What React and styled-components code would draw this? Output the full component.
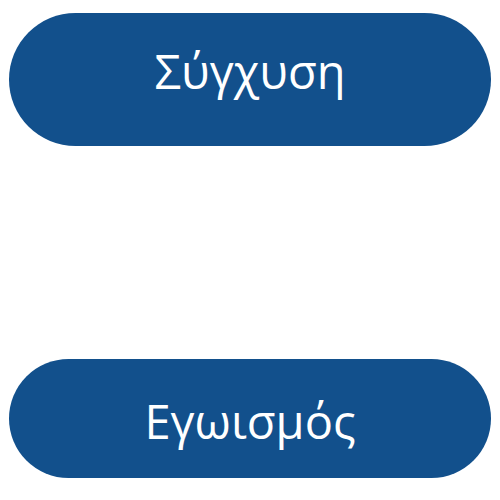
import React from "react";
import styled, { createGlobalStyle } from "styled-components";

const Global = createGlobalStyle`
  html, body { margin: 0; padding: 0; background: #ffffff; }
  body { font-family: "Open Sans", "Noto Sans", sans-serif; }
`;

const Page = styled.div`
  width: 500px;
  height: 500px;
  box-sizing: border-box;
  padding: 13px 9px 0 9px;
  display: flex;
  flex-direction: column;
  gap: 213px;
  background: #ffffff;
`;

const PillButton = styled.button`
  width: 482px;
  height: ${(p) => p.$h}px;
  box-sizing: border-box;
  border: none;
  border-radius: 70px;
  background: #12508c;
  color: #ffffff;
  font-family: "Open Sans", "Noto Sans", sans-serif;
  font-size: 47px;
  font-weight: 400;
  display: flex;
  align-items: center;
  justify-content: center;
  padding: ${(p) => p.$pt}px 0 ${(p) => p.$pb}px 0;
  cursor: pointer;
`;

export default function App() {
  return (
    <>
      <Global />
      <Page>
        <PillButton $h={133} $pt={0} $pb={17}>Σύγχυση</PillButton>
        <PillButton $h={119} $pt={4} $pb={0}>Εγωισμός</PillButton>
      </Page>
    </>
  );
}
